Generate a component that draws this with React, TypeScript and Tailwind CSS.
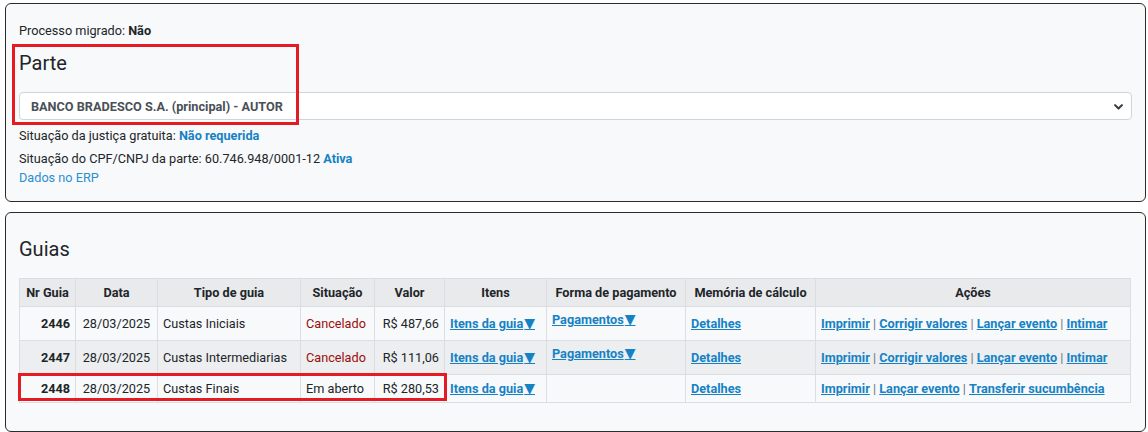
import React from "react";

interface Guia {
  nr: number;
  data: string;
  tipo: string;
  situacao: string;
  valor: string;
  pagamentos: boolean;
  acoes: string[];
}

const guias: Guia[] = [
  {
    nr: 2446,
    data: "28/03/2025",
    tipo: "Custas Iniciais",
    situacao: "Cancelado",
    valor: "R$ 487,66",
    pagamentos: true,
    acoes: ["Imprimir", "Corrigir valores", "Lançar evento", "Intimar"],
  },
  {
    nr: 2447,
    data: "28/03/2025",
    tipo: "Custas Intermediarias",
    situacao: "Cancelado",
    valor: "R$ 111,06",
    pagamentos: true,
    acoes: ["Imprimir", "Corrigir valores", "Lançar evento", "Intimar"],
  },
  {
    nr: 2448,
    data: "28/03/2025",
    tipo: "Custas Finais",
    situacao: "Em aberto",
    valor: "R$ 280,53",
    pagamentos: false,
    acoes: ["Imprimir", "Lançar evento", "Transferir sucumbência"],
  },
];

const link = "font-bold underline text-[#1582c5]";
const th = "border border-[#dadde1] px-[5px] py-[4px] font-bold text-center";
const td = "border border-[#dadde1] px-[5px] py-[4px] align-middle";

// dropdown arrow, DejaVu has the big filled triangle
const Arrow = () => (
  <span
    className="ml-[1px] text-[14px] leading-none"
    style={{ fontFamily: "'DejaVu Sans', sans-serif" }}
  >
    ▼
  </span>
);

const App = () => {
  return (
    <div
      className="relative min-h-[432px] bg-white pt-[3px] text-[12.7px] leading-[19px] text-[#212529]"
      style={{ fontFamily: "Roboto, 'Liberation Sans', sans-serif" }}
    >
      {/* Parte */}
      <div className="ml-[5px] mr-[2px] rounded-[6px] border border-[#2b2b2b] bg-[#f8f9fa] px-[13px] pt-[17px] pb-[14px]">
        <p className="leading-[20px]">
          Processo migrado: <b>Não</b>
        </p>
        <h4 className="mt-[10px] text-[20px] leading-[24px]">Parte</h4>
        <div className="mt-[17px] flex h-[28px] items-center justify-between rounded-[4px] border border-[#ced4da] bg-white pl-[11px] pr-[7px]">
          <span className="font-bold text-[#495057]">
            BANCO BRADESCO S.A. (principal) - AUTOR
          </span>
          <svg width="11" height="11" viewBox="0 0 16 16">
            <path
              d="M3 6l5 5 5-5"
              fill="none"
              stroke="#343a40"
              strokeWidth="3"
              strokeLinecap="round"
              strokeLinejoin="round"
            />
          </svg>
        </div>
        <p className="mt-[6px]">
          Situação da justiça gratuita:{" "}
          <span className="font-bold text-[#1582c5]">Não requerida</span>
        </p>
        <p className="mt-[4px]">
          Situação do CPF/CNPJ da parte: 60.746.948/0001-12{" "}
          <span className="font-bold text-[#1582c5]">Ativa</span>
        </p>
        <p className="text-[#2b8fd1]">Dados no ERP</p>
      </div>

      {/* Guias */}
      <div className="mt-[10px] ml-[5px] mr-[2px] rounded-[6px] border border-[#2b2b2b] bg-[#f8f9fa] px-[13px] pt-[24px] pb-[28px]">
        <h4 className="text-[20px] leading-[24px]">Guias</h4>
        <table className="mt-[17px] w-[1111px] table-fixed border-collapse">
          <colgroup>
            <col className="w-[56px]" />
            <col className="w-[82px]" />
            <col className="w-[143px]" />
            <col className="w-[74px]" />
            <col className="w-[70px]" />
            <col className="w-[102px]" />
            <col className="w-[139px]" />
            <col className="w-[130px]" />
            <col className="w-[315px]" />
          </colgroup>
          <thead>
            <tr className="bg-[#e9eaec]">
              <th className={th}>Nr Guia</th>
              <th className={th}>Data</th>
              <th className={th}>Tipo de guia</th>
              <th className={th}>Situação</th>
              <th className={th}>Valor</th>
              <th className={th}>Itens</th>
              <th className={th}>Forma de pagamento</th>
              <th className={th}>Memória de cálculo</th>
              <th className={th}>Ações</th>
            </tr>
          </thead>
          <tbody>
            {guias.map((g, i) => (
              <tr key={g.nr} className={i % 2 === 1 ? "bg-[#eceef0]" : "bg-[#f8f9fa]"}>
                <td className={`${td} text-right font-bold`}>{g.nr}</td>
                <td className={`${td} text-center whitespace-nowrap`}>{g.data}</td>
                <td className={`${td} whitespace-nowrap`}>{g.tipo}</td>
                <td
                  className={`${td} whitespace-nowrap ${
                    g.situacao === "Cancelado" ? "text-[#9b0d0d]" : ""
                  }`}
                >
                  {g.situacao}
                </td>
                <td className={`${td} text-right whitespace-nowrap`}>{g.valor}</td>
                <td className={`${td} whitespace-nowrap`}>
                  <span className={link}>
                    Itens da guia
                    <Arrow />
                  </span>
                </td>
                <td className={`${td} align-top`}>
                  {g.pagamentos && (
                    <div className="h-[25px] leading-[17px]">
                      <span className={link}>
                        Pagamentos
                        <Arrow />
                      </span>
                    </div>
                  )}
                </td>
                <td className={td}>
                  <span className={link}>Detalhes</span>
                </td>
                <td className={`${td} whitespace-nowrap`}>
                  {g.acoes.map((a, j) => (
                    <React.Fragment key={a}>
                      {j > 0 && <span className="text-[#6c757d]"> | </span>}
                      <span className={link}>{a}</span>
                    </React.Fragment>
                  ))}
                </td>
              </tr>
            ))}
          </tbody>
        </table>
      </div>

      {/* annotation boxes */}
      <div className="pointer-events-none absolute left-[12px] top-[44px] h-[81px] w-[287px] border-[3px] border-[#e51b23]" />
      <div className="pointer-events-none absolute left-[18px] top-[373px] h-[28px] w-[429px] border-[3px] border-[#e51b23]" />
    </div>
  );
};

export default App;
